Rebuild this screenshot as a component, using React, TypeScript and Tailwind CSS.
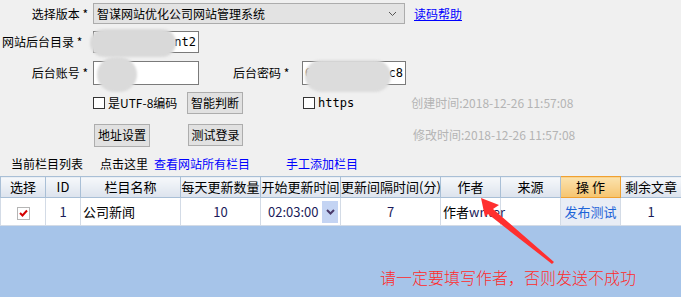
import React from 'react';

const cols = [
  { label: '选择', w: 'w-[45px]' },
  { label: 'ID', w: 'w-[35px]' },
  { label: '栏目名称', w: 'w-[100px]' },
  { label: '每天更新数量', w: 'w-[80px]' },
  { label: '开始更新时间', w: 'w-[80px]' },
  { label: '更新间隔时间(分)', w: 'w-[100px]' },
  { label: '作者', w: 'w-[60px]' },
  { label: '来源', w: 'w-[60px]' },
  { label: '操 作', w: 'w-[60px]' },
  { label: '剩余文章', w: 'w-[61px]' },
];

const Label: React.FC<{ text: string; w: string }> = ({ text, w }) => (
  <span className={`${w} shrink-0 text-right pr-[5px] text-black whitespace-nowrap`}>{text} *</span>
);

const Btn: React.FC<{ text: string; cls?: string }> = ({ text, cls = '' }) => (
  <button className={`h-[22px] px-0 whitespace-nowrap bg-[#e1e1e1] border border-[#adadad] text-[12px] text-black ${cls}`}>
    {text}
  </button>
);

const Check: React.FC = () => (
  <span className="inline-block w-[12px] h-[12px] bg-white border border-[#333] mr-[3px]" />
);

export default function App() {
  return (
    <div
      className="relative w-[681px] h-[297px] bg-[#f0f0f0] overflow-hidden text-[12px]"
      style={{ fontFamily: '"Noto Sans CJK SC", "Liberation Sans", sans-serif' }}
    >
      <div className="flex flex-col pt-[3px]">
        {/* row 1 */}
        <div className="flex items-center h-[21px]">
          <Label text="选择版本" w="w-[93px]" />
          <div className="w-[312px] h-[21px] bg-[#e3e3e3] border border-[#acacac] flex items-center justify-between px-[3px]">
            <span>智谋网站优化公司网站管理系统</span>
            <svg width="9" height="6" viewBox="0 0 9 6" className="mr-[4px]">
              <path d="M1 1l3.5 3.5L8 1" fill="none" stroke="#555" strokeWidth="1" />
            </svg>
          </div>
          <a className="ml-[9px] text-[#0000ff] underline">读码帮助</a>
        </div>

        {/* row 2 */}
        <div className="flex items-center h-[22px] mt-[7px]">
          <span className="w-[93px] shrink-0 pl-[2px] pr-[5px] whitespace-nowrap">网站后台目录 *</span>
          <div className="w-[106px] h-[22px] bg-white border border-[#7a7a7a] flex items-center justify-end pr-[2px]" style={{ fontFamily: '"DejaVu Sans Mono", monospace' }}>
            nt2
          </div>
        </div>

        {/* row 3 */}
        <div className="flex items-center h-[24px] mt-[8px]">
          <Label text="后台账号" w="w-[93px]" />
          <div className="w-[106px] h-[24px] bg-white border border-[#7a7a7a]" />
          <span className="ml-[34px] w-[69px] text-left">后台密码 *</span>
          <div className="w-[104px] h-[24px] bg-white border border-[#7a7a7a] flex items-center justify-between px-[2px]" style={{ fontFamily: '"DejaVu Sans Mono", monospace' }}>
            <span>6</span>
            <span>c8</span>
          </div>
        </div>

        {/* row 4 */}
        <div className="flex items-center h-[22px] mt-[7px]">
          <span className="w-[93px] shrink-0" />
          <span className="flex items-center w-[94px]">
            <Check />
            <span>是UTF-8编码</span>
          </span>
          <Btn text="智能判断" cls="w-[56px]" />
          <span className="flex items-center ml-[60px]">
            <Check />
            <span style={{ fontFamily: '"DejaVu Sans Mono", monospace' }}>https</span>
          </span>
          <span className="ml-[57px] text-[#b4b4b4]">创建时间:2018-12-26 11:57:08</span>
        </div>

        {/* row 5 */}
        <div className="flex items-center h-[24px] mt-[9px]">
          <span className="w-[94px] shrink-0" />
          <Btn text="地址设置" cls="w-[56px] h-[23px]" />
          <Btn text="测试登录" cls="w-[55px] ml-[38px]" />
          <span className="ml-[170px] text-[#b4b4b4]">修改时间:2018-12-26 11:57:08</span>
        </div>

        {/* row 6 */}
        <div className="flex items-center h-[16px] mt-[9px]">
          <span className="ml-[11px]">当前栏目列表</span>
          <span className="ml-[17px]">点击这里</span>
          <span className="ml-[6px] text-[#0000ff]">查看网站所有栏目</span>
          <span className="ml-[36px] text-[#0000ff]">手工添加栏目</span>
        </div>

        {/* table */}
        <table className="mt-[4px] w-[681px] table-fixed border-collapse text-[13px]">
          <thead>
            <tr className="h-[21px]">
              {cols.map((c, i) =>
                i === 8 ? (
                  <th key={i} className={`${c.w} p-0 font-normal border border-[#f0a030] bg-gradient-to-b from-[#fbe2ad] to-[#f6c46e]`}>
                    {c.label}
                  </th>
                ) : (
                  <th key={i} className={`${c.w} p-0 font-normal whitespace-nowrap border border-[#a9bfd6] bg-gradient-to-b from-[#f6f8fb] to-[#dce3ed]`}>
                    {c.label}
                  </th>
                )
              )}
            </tr>
          </thead>
          <tbody>
            <tr className="h-[28px] bg-white">
              <td className="border border-[#d3dbe6] text-center p-0">
                <span className="inline-flex items-center justify-center w-[13px] h-[13px] border border-[#b5b5b5] bg-white align-middle">
                  <svg width="9" height="8" viewBox="0 0 9 8">
                    <path d="M1 4l2.5 2.5L8 1.5" fill="none" stroke="#d40000" strokeWidth="2" />
                  </svg>
                </span>
              </td>
              <td className="border border-[#d3dbe6] text-center p-0 text-[#1b1b5a]">1</td>
              <td className="border border-[#d3dbe6] text-left pl-[2px] p-0">公司新闻</td>
              <td className="border border-[#d3dbe6] text-center p-0 text-[#1b1b5a]">10</td>
              <td className="border border-[#d3dbe6] p-0">
                <div className="flex items-center justify-between h-[27px]">
                  <span className="pl-[7px] text-[#1b1b5a]">02:03:00</span>
                  <span className="w-[16px] h-[22px] mr-[2px] bg-[#c4d4f3] flex items-center justify-center">
                    <svg width="9" height="6" viewBox="0 0 9 6">
                      <path d="M1 1l3.5 3.5L8 1" fill="none" stroke="#4a3a6a" strokeWidth="2" />
                    </svg>
                  </span>
                </div>
              </td>
              <td className="border border-[#d3dbe6] text-center p-0 text-[#1b1b5a]">7</td>
              <td className="border border-[#d3dbe6] text-left pl-[2px] p-0 whitespace-nowrap">
                作者<span className="text-[#1b1b5a]">writer</span>
              </td>
              <td className="border border-[#d3dbe6] p-0" />
              <td className="border border-[#d3dbe6] bg-[#e9edf5] text-center p-0 text-[#1e64d8]">发布测试</td>
              <td className="border border-[#d3dbe6] text-center p-0 text-[#1b1b5a]">1</td>
            </tr>
          </tbody>
        </table>
        <div className="h-[80px] bg-[#a6c4e9] flex justify-start">
          <span className="ml-[380px] mt-[39px] text-[16px] text-[#ff2a2a] font-light">请一定要填写作者，否则发送不成功</span>
        </div>
      </div>

      {/* blurred masks */}
      <div className="absolute left-[90px] top-[29px] w-[86px] h-[28px] rounded-full bg-[#d9d9d9] blur-[1px]" />
      <div className="absolute left-[97px] top-[57px] w-[40px] h-[35px] rounded-full bg-[#dadada] blur-[1px]" />
      <div className="absolute left-[305px] top-[60px] w-[86px] h-[32px] rounded-full bg-[#dcdcdc] blur-[1px]" />

      {/* red arrow */}
      <svg className="absolute left-0 top-0" width="681" height="297">
        <polygon points="481,198 499,205 493,209 554,262 552,264 488,214 485,217" fill="#ff2f2f" />
      </svg>
    </div>
  );
}
